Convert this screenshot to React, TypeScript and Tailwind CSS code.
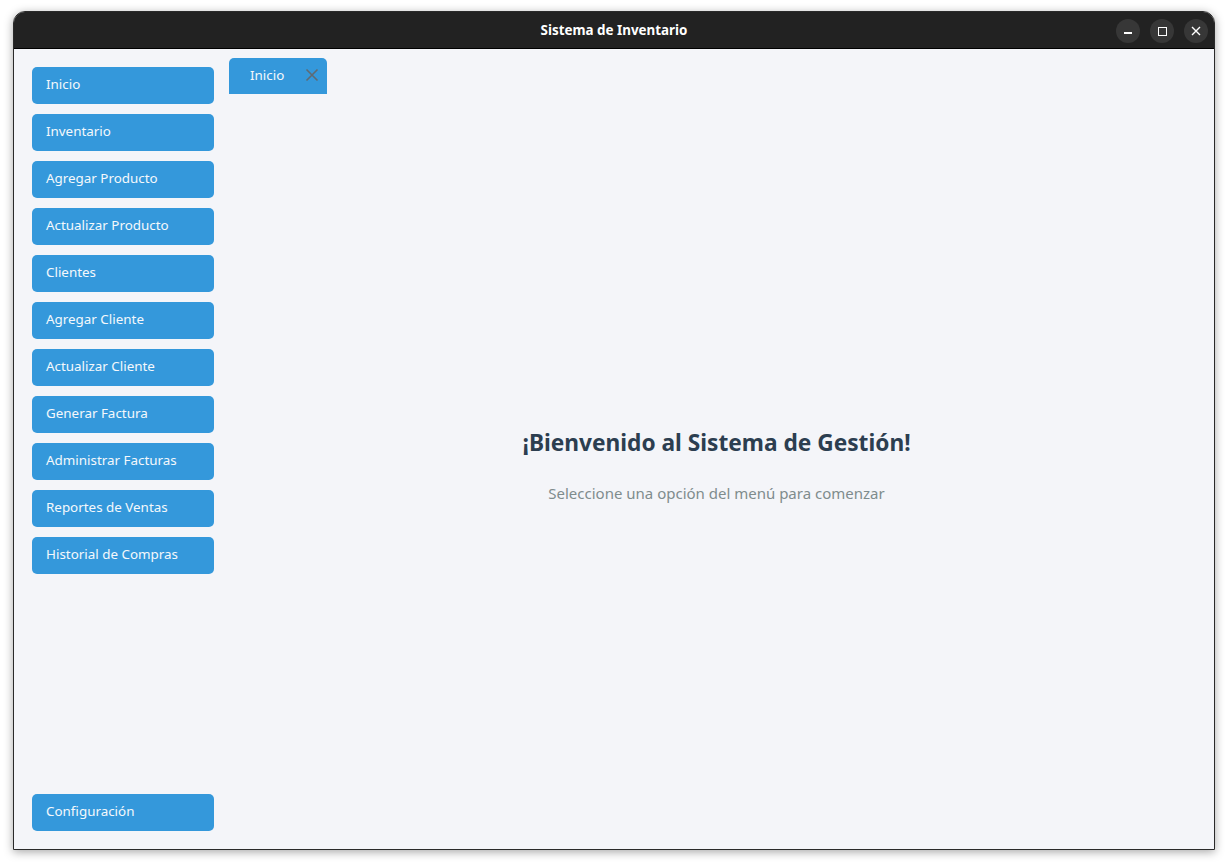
import React from 'react';

const menu = [
  'Inicio',
  'Inventario',
  'Agregar Producto',
  'Actualizar Producto',
  'Clientes',
  'Agregar Cliente',
  'Actualizar Cliente',
  'Generar Factura',
  'Administrar Facturas',
  'Reportes de Ventas',
  'Historial de Compras',
];

const MenuButton: React.FC<{ label: string }> = ({ label }) => (
  <button className="w-[182px] h-[37px] rounded-[5px] bg-[#3498db] text-left pl-[14px] pb-[2px] text-[13.4px] text-[#f4f8fc] leading-none">
    {label}
  </button>
);

const App: React.FC = () => {
  return (
    <div className="w-[1228px] h-[866px] bg-white pt-[11px] pl-[13px] font-['Noto_Sans',sans-serif]">
      <div className="w-[1202px] h-[839px] flex flex-col rounded-t-[12px] border border-[#2a2a2a] overflow-hidden shadow-[0_2px_10px_rgba(0,0,0,0.35)]">
        {/* title bar */}
        <div className="h-[37px] bg-[#222222] border-b border-black flex items-center relative shrink-0">
          <div className="flex-1 text-center text-white text-[13.4px] font-bold">Sistema de Inventario</div>
          <div className="absolute right-[6px] top-[7px] flex gap-[10px]">
            <div className="w-[24px] h-[24px] rounded-full bg-[#373737] flex items-center justify-center">
              <div className="w-[8px] h-[1.5px] bg-white mt-[4px]" />
            </div>
            <div className="w-[24px] h-[24px] rounded-full bg-[#373737] flex items-center justify-center">
              <div className="w-[9px] h-[9px] border border-white" />
            </div>
            <div className="w-[24px] h-[24px] rounded-full bg-[#373737] flex items-center justify-center">
              <svg width="10" height="10" viewBox="0 0 10 10">
                <path d="M1 1L9 9M9 1L1 9" stroke="white" strokeWidth="1.4" />
              </svg>
            </div>
          </div>
        </div>

        {/* body */}
        <div className="flex-1 bg-[#f4f5f9] flex">
          <div className="flex flex-col justify-between pl-[18px] pt-[18px] pb-[18px]">
            <div className="flex flex-col gap-[10px]">
              {menu.map((m) => (
                <MenuButton key={m} label={m} />
              ))}
            </div>
            <MenuButton label="Configuración" />
          </div>

          <div className="flex-1 flex flex-col pl-[15px] pt-[9px]">
            <div className="flex">
              <div className="w-[98px] h-[36px] bg-[#3498db] rounded-t-[5px] flex items-center pl-[21px] pr-[8px] pb-[2px] justify-between">
                <span className="text-[13.4px] text-[#f4f8fc]">Inicio</span>
                <svg width="14" height="14" viewBox="0 0 14 14">
                  <path d="M1.5 1.5L12.5 12.5M12.5 1.5L1.5 12.5" stroke="#5f6a72" strokeWidth="1.6" />
                </svg>
              </div>
            </div>
            <div className="flex-1 flex flex-col items-center justify-center pr-[10px] pb-[12px]">
              <h1 className="text-[22.7px] font-bold text-[#2c3e50]">¡Bienvenido al Sistema de Gestión!</h1>
              <p className="mt-[22px] text-[15px] text-[#7f8c8d]">Seleccione una opción del menú para comenzar</p>
            </div>
          </div>
        </div>
      </div>
    </div>
  );
};

export default App;
